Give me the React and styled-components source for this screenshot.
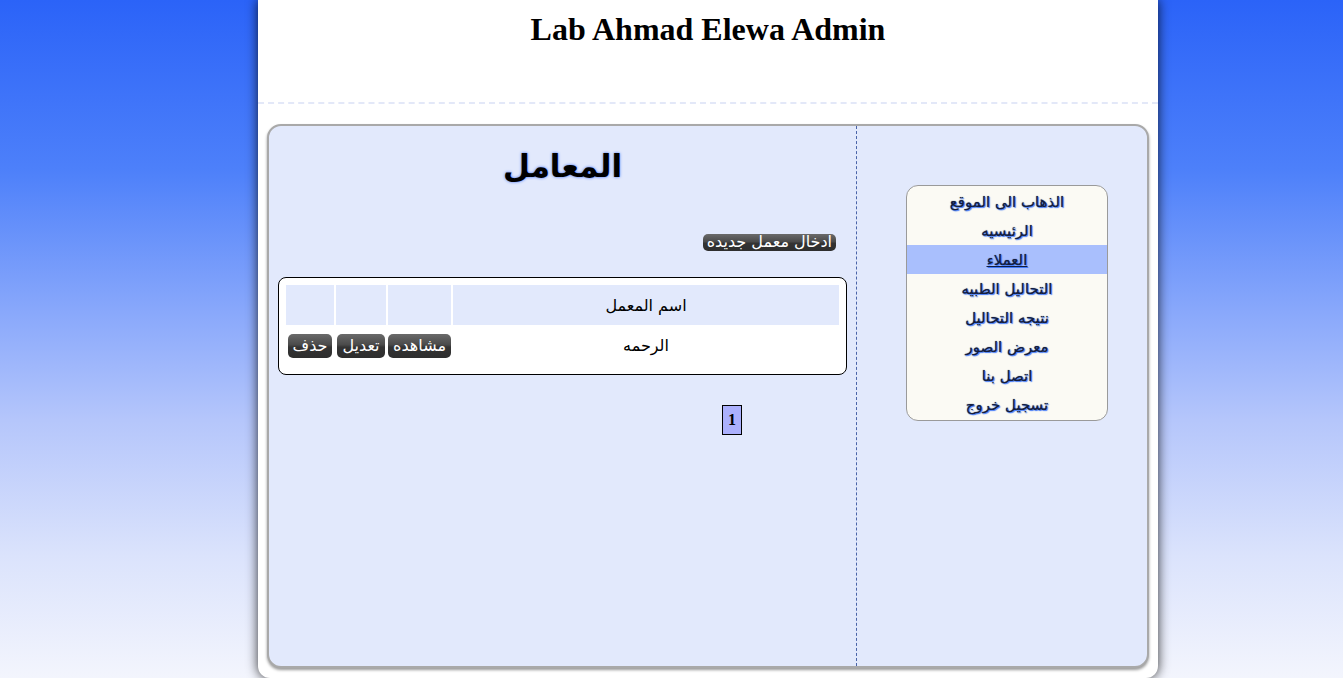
import React from 'react';
import styled, { createGlobalStyle } from 'styled-components';

const GlobalStyle = createGlobalStyle`
  html, body {
    margin: 0;
    padding: 0;
    height: 100%;
  }
  body {
    background: linear-gradient(to bottom, #2b63f8 0%, #4d80fa 25%, #86a6fb 45%, #b5c6fb 62%, #dbe3fc 82%, #f3f5fd 100%);
    font-family: "DejaVu Sans", "Noto Sans", sans-serif;
    overflow: hidden;
  }
`;

const Page = styled.div`
  width: 900px;
  height: 678px;
  margin: 0 0 0 258px;
  background: #fff;
  border-radius: 0 0 12px 12px;
  box-shadow: 0 0 12px rgba(0, 0, 0, 0.8);
  overflow: hidden;
`;

const Header = styled.div`
  height: 102px;
  border-bottom: 2px dashed #e3e8f8;
  text-align: center;
`;

const SiteTitle = styled.h1`
  margin: 0;
  padding-top: 11px;
  font-family: "Liberation Serif", serif;
  font-size: 32px;
  font-weight: bold;
  color: #000;
`;

const Panel = styled.div`
  display: flex;
  margin: 20px 9px 0 9px;
  height: 540px;
  background: #e2e9fc;
  border: 2px solid #a9a9a9;
  border-radius: 14px;
  box-shadow: 0 2px 3px rgba(0, 0, 0, 0.4);
  overflow: hidden;
`;

const Main = styled.div`
  width: 589px;
  border-right: 1px dashed #4a64a8;
  direction: rtl;
`;

const PageTitle = styled.h2`
  margin: 20px 0 0 0;
  text-align: center;
  font-size: 31px;
  font-weight: bold;
  line-height: 40px;
  color: #000;
  text-shadow: 0 0 3px #3c6df8;
`;

const TopBar = styled.div`
  display: flex;
  margin: 48px 20px 0 0;
`;

const DarkButton = styled.a`
  display: inline-block;
  padding: ${p => (p.$small ? '0 4px' : '1px 5px')};
  height: ${p => (p.$small ? '17px' : '24px')};
  line-height: ${p => (p.$small ? '16px' : '21px')};
  font-size: 16px;
  color: #fff;
  text-decoration: none;
  white-space: nowrap;
  border-radius: 5px;
  background: linear-gradient(to bottom, #6a6a6a 0%, #4a4a4a 45%, #333 55%, #2e2e2e 100%);
  box-sizing: border-box;
  cursor: pointer;
`;

const TableBox = styled.div`
  margin: 26px 9px 0 9px;
  padding: 5px;
  border: 1px solid #000;
  border-radius: 8px;
  background: #fff;
`;

const Table = styled.table`
  width: 100%;
  border-spacing: 2px;
  font-size: 16px;
`;

const HeadCell = styled.th`
  height: 40px;
  padding: 0;
  background: #e2e9fc;
  font-weight: normal;
  width: ${p => p.$w || 'auto'};
`;

const Cell = styled.td`
  height: 40px;
  box-sizing: border-box;
  padding: ${p => (p.$text ? '9px' : '7px')} 0 0 0;
  text-align: center;
  vertical-align: top;
`;

const Pager = styled.div`
  display: flex;
  margin: 30px 114px 0 0;
`;

const PageNum = styled.span`
  display: inline-block;
  width: 18px;
  height: 28px;
  line-height: 28px;
  text-align: center;
  border: 1px solid #000;
  background: #abb0fd;
  font-family: "Liberation Serif", serif;
  font-weight: bold;
  font-size: 16px;
  color: #000;
`;

const Side = styled.div`
  flex: 1;
  padding: 59px 39px 0 49px;
  direction: rtl;
`;

const Menu = styled.ul`
  list-style: none;
  margin: 0;
  width: 200px;
  background: #fbfaf4;
  border: 1px solid #9a9a9a;
  border-radius: 12px;
  overflow: hidden;
  padding: 1px 0 1px;
`;

const MenuItem = styled.li`
  height: 29px;
  line-height: 30px;
  text-align: center;
  font-size: 15px;
  font-weight: normal;
  background: ${p => (p.$active ? '#a9bffd' : 'transparent')};
  a {
    color: #141d3e;
    text-decoration: ${p => (p.$active ? 'underline' : 'none')};
    text-shadow: 1px 1px 1px #3f78fb, 0 0 1px #1c2a55;
  }
`;

const menu = [
  'الذهاب الى الموقع',
  'الرئيسيه',
  'العملاء',
  'التحاليل الطبيه',
  'نتيجه التحاليل',
  'معرض الصور',
  'اتصل بنا',
  'تسجيل خروج',
];

export default function App() {
  return (
    <>
      <GlobalStyle />
      <Page>
        <Header>
          <SiteTitle>Lab Ahmad Elewa Admin</SiteTitle>
        </Header>
        <Panel>
          <Main>
            <PageTitle>المعامل</PageTitle>
            <TopBar>
              <DarkButton $small>ادخال معمل جديده</DarkButton>
            </TopBar>
            <TableBox>
              <Table>
                <thead>
                  <tr>
                    <HeadCell>اسم المعمل</HeadCell>
                    <HeadCell $w="63px" />
                    <HeadCell $w="50px" />
                    <HeadCell $w="48px" />
                  </tr>
                </thead>
                <tbody>
                  <tr>
                    <Cell $text>الرحمه</Cell>
                    <Cell><DarkButton>مشاهده</DarkButton></Cell>
                    <Cell><DarkButton>تعديل</DarkButton></Cell>
                    <Cell><DarkButton>حذف</DarkButton></Cell>
                  </tr>
                </tbody>
              </Table>
            </TableBox>
            <Pager>
              <PageNum>1</PageNum>
            </Pager>
          </Main>
          <Side>
            <Menu>
              {menu.map(item => (
                <MenuItem key={item} $active={item === 'العملاء'}>
                  <a href="#">{item}</a>
                </MenuItem>
              ))}
            </Menu>
          </Side>
        </Panel>
      </Page>
    </>
  );
}
